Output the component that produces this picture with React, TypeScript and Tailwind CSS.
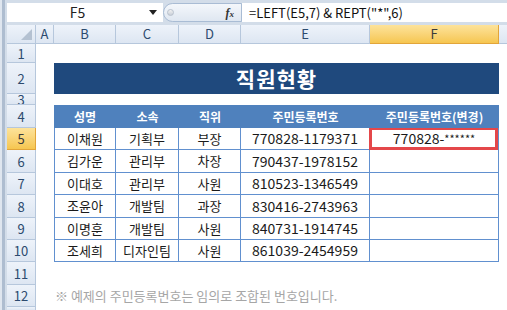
import type { ReactNode } from 'react';

const font = "font-['Noto_Sans_CJK_KR','Noto_Sans',sans-serif]";

const staff = [
  { name: '이채원', dept: '기획부', rank: '부장', id: '770828-1179371', masked: '770828-' },
  { name: '김가운', dept: '관리부', rank: '차장', id: '790437-1978152', masked: '' },
  { name: '이대호', dept: '관리부', rank: '사원', id: '810523-1346549', masked: '' },
  { name: '조윤아', dept: '개발팀', rank: '과장', id: '830416-2743963', masked: '' },
  { name: '이명훈', dept: '개발팀', rank: '사원', id: '840731-1914745', masked: '' },
  { name: '조세희', dept: '디자인팀', rank: '사원', id: '861039-2454959', masked: '' },
];

// heights of rows 5..10
const dataHeights = ['h-[22px]', 'h-[23px]', 'h-[22px]', 'h-[23px]', 'h-[22px]', 'h-[22px]'];

function RowHead({ n, active }: { n: number; active?: boolean }) {
  return (
    <div
      className={
        active
          ? 'w-[29px] shrink-0 overflow-hidden flex items-center justify-center border-r border-b border-[#e2a53a] bg-gradient-to-b from-[#fde39a] to-[#f6c64f] text-[13px] leading-none text-[#3a3a3a]'
          : 'w-[29px] shrink-0 overflow-hidden flex items-center justify-center border-r border-b border-[#b6c7dc] bg-gradient-to-b from-[#eef3fa] to-[#dde6f2] text-[13px] leading-none text-[#2c4a6e]'
      }
    >
      {n}
    </div>
  );
}

function SheetRow({ n, h, active, children }: { n: number; h: string; active?: boolean; children?: ReactNode }) {
  return (
    <div className={`flex shrink-0 overflow-hidden ${h}`}>
      <RowHead n={n} active={active} />
      <div className="w-[18px] shrink-0" />
      {children}
    </div>
  );
}

function ColHead({ label, w, active }: { label: string; w: string; active?: boolean }) {
  return (
    <div
      className={
        active
          ? `${w} shrink-0 flex items-center justify-center border-r border-b border-[#e2a53a] bg-gradient-to-b from-[#fde39a] to-[#f6c64f] text-[13px] text-[#3a3a3a]`
          : `${w} shrink-0 flex items-center justify-center border-r border-b border-[#b6c7dc] bg-gradient-to-b from-[#eef3fa] to-[#dde6f2] text-[13px] text-[#2c4a6e]`
      }
    >
      {label}
    </div>
  );
}

export default function App() {
  return (
    <div className={`w-[507px] h-[310px] overflow-hidden bg-white flex ${font}`}>
      {/* window frame strip */}
      <div className="w-[7px] shrink-0 flex">
        <div className="w-[2px] bg-[#dfe6ef]" />
        <div className="w-[3px] bg-[#aebdd0]" />
        <div className="w-[2px] bg-[#d3dde9]" />
      </div>

      <div className="flex-1 flex flex-col min-w-0">
        {/* formula bar */}
        <div className="h-[25px] shrink-0 pt-[3px] pb-[3px] bg-[#d3dde9] flex flex-col">
          <div className="h-[19px] flex">
            <div className="w-[156px] shrink-0 bg-white flex items-center">
              <span className="w-[141px] text-center text-[14px] text-[#222]">F5</span>
              <svg width="8" height="5" viewBox="0 0 8 5" className="ml-[1px]">
                <path d="M0 0 H8 L4 5 Z" fill="#222" />
              </svg>
            </div>
            <div className="w-[79px] shrink-0 flex items-center rounded-l-full border border-[#a9bcd4] bg-gradient-to-b from-[#f4f7fb] to-[#dfe7f1]">
              <span className="ml-[3px] w-[7px] h-[7px] rounded-full bg-gradient-to-b from-[#f2f2f2] to-[#c9cfd8] border border-[#b8c1cd]" />
              <span className="ml-auto mr-[7px] font-['Liberation_Serif',serif] italic font-bold text-[12px] text-[#333]">
                f<span className="text-[9px]">x</span>
              </span>
            </div>
            <div className="flex-1 bg-white flex items-center pl-[7px] text-[13px] text-[#111] whitespace-nowrap">
              =LEFT(E5,7) &amp; REPT("*",6)
            </div>
          </div>
        </div>

        {/* column headers */}
        <div className="h-[19px] shrink-0 flex">
          <div className="w-[29px] shrink-0 border-r border-b border-[#b6c7dc] bg-gradient-to-b from-[#eef3fa] to-[#dde6f2] flex items-end justify-end pr-[3px] pb-[3px]">
            <svg width="11" height="11" viewBox="0 0 11 11">
              <path d="M11 0 V11 H0 Z" fill="#b4c1d1" />
            </svg>
          </div>
          <ColHead label="A" w="w-[18px]" />
          <ColHead label="B" w="w-[62px]" />
          <ColHead label="C" w="w-[63px]" />
          <ColHead label="D" w="w-[62px]" />
          <ColHead label="E" w="w-[129px]" />
          <ColHead label="F" w="w-[129px]" active />
          <div className="flex-1 border-b border-[#b6c7dc] bg-gradient-to-b from-[#eef3fa] to-[#dde6f2]" />
        </div>

        <SheetRow n={1} h="h-[19px]" />

        <SheetRow n={2} h="h-[31px]">
          <div className="w-[445px] shrink-0 bg-[#1f497d] flex items-center justify-center text-white font-bold text-[21px] tracking-[1px]">
            직원현황
          </div>
        </SheetRow>

        <SheetRow n={3} h="h-[11px]" />

        <SheetRow n={4} h="h-[23px]">
          <div className="w-[445px] shrink-0 flex bg-[#4f81bd] text-white font-bold text-[12px]">
            <div className="w-[62px] flex items-center justify-center">성명</div>
            <div className="w-[63px] flex items-center justify-center">소속</div>
            <div className="w-[62px] flex items-center justify-center">직위</div>
            <div className="w-[129px] flex items-center justify-center">주민등록번호</div>
            <div className="w-[129px] flex items-center justify-center">주민등록번호(변경)</div>
          </div>
        </SheetRow>

        {staff.map((p, i) => (
          <SheetRow key={p.id} n={i + 5} h={dataHeights[i]} active={i === 0}>
            <div className="w-[445px] shrink-0 flex text-[#1a1a1a]">
              <div className="w-[62px] flex items-center justify-center border-l border-r border-b border-[#6190cf] text-[13px]">
                {p.name}
              </div>
              <div className="w-[63px] flex items-center justify-center border-r border-b border-[#6190cf] text-[13px]">
                {p.dept}
              </div>
              <div className="w-[62px] flex items-center justify-center border-r border-b border-[#6190cf] text-[13px]">
                {p.rank}
              </div>
              <div className="w-[129px] flex items-center justify-center border-r border-b border-[#6190cf] text-[14px]">
                {p.id}
              </div>
              <div className="relative w-[129px] flex items-center justify-center border-r border-b border-[#6190cf] text-[14px]">
                {p.masked && (
                  <span>
                    {p.masked}
                    <span className="relative -top-[1px] text-[11px]">******</span>
                  </span>
                )}
                {i === 0 && (
                  <span className="absolute -left-[1px] -top-[1px] right-0 -bottom-[1px] border-[3px] border-[#e4474a]" />
                )}
              </div>
            </div>
          </SheetRow>
        ))}

        <SheetRow n={11} h="h-[23px]" />

        <SheetRow n={12} h="h-[22px]">
          <div className="flex items-center pl-[1px] text-[13px] text-[#a6a6a6] whitespace-nowrap">
            ※ 예제의 주민등록번호는 임의로 조합된 번호입니다.
          </div>
        </SheetRow>

        <div className="flex-1 flex overflow-hidden">
          <div className="w-[29px] shrink-0 border-r border-[#b6c7dc] bg-gradient-to-b from-[#eef3fa] to-[#dde6f2]" />
        </div>
      </div>
    </div>
  );
}
